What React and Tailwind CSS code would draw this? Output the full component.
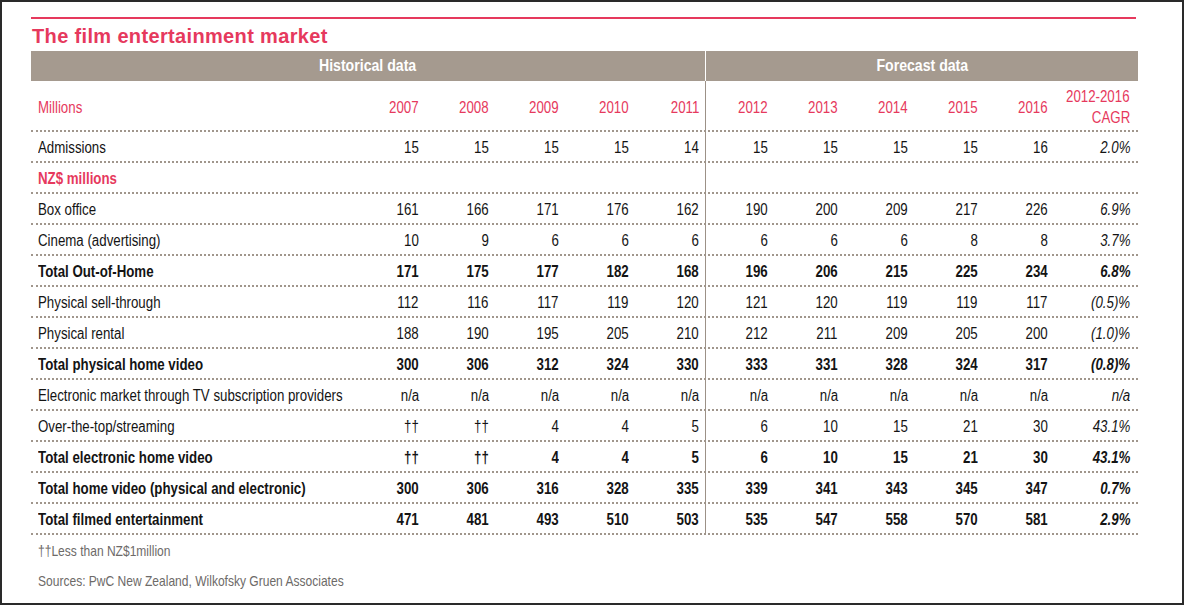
const rows = [
  { label: 'Admissions', vals: ['15', '15', '15', '15', '14', '15', '15', '15', '15', '16'], cagr: '2.0%' },
  { label: 'NZ$ millions', section: true },
  { label: 'Box office', vals: ['161', '166', '171', '176', '162', '190', '200', '209', '217', '226'], cagr: '6.9%' },
  { label: 'Cinema (advertising)', vals: ['10', '9', '6', '6', '6', '6', '6', '6', '8', '8'], cagr: '3.7%' },
  { label: 'Total Out-of-Home', bold: true, vals: ['171', '175', '177', '182', '168', '196', '206', '215', '225', '234'], cagr: '6.8%' },
  { label: 'Physical sell-through', vals: ['112', '116', '117', '119', '120', '121', '120', '119', '119', '117'], cagr: '(0.5)%' },
  { label: 'Physical rental', vals: ['188', '190', '195', '205', '210', '212', '211', '209', '205', '200'], cagr: '(1.0)%' },
  { label: 'Total physical home video', bold: true, vals: ['300', '306', '312', '324', '330', '333', '331', '328', '324', '317'], cagr: '(0.8)%' },
  { label: 'Electronic market through TV subscription providers', vals: ['n/a', 'n/a', 'n/a', 'n/a', 'n/a', 'n/a', 'n/a', 'n/a', 'n/a', 'n/a'], cagr: 'n/a' },
  { label: 'Over-the-top/streaming', vals: ['††', '††', '4', '4', '5', '6', '10', '15', '21', '30'], cagr: '43.1%' },
  { label: 'Total electronic home video', bold: true, vals: ['††', '††', '4', '4', '5', '6', '10', '15', '21', '30'], cagr: '43.1%' },
  { label: 'Total home video (physical and electronic)', bold: true, vals: ['300', '306', '316', '328', '335', '339', '341', '343', '345', '347'], cagr: '0.7%' },
  { label: 'Total filmed entertainment', bold: true, vals: ['471', '481', '493', '510', '503', '535', '547', '558', '570', '581'], cagr: '2.9%' },
];

const years = ['2007', '2008', '2009', '2010', '2011', '2012', '2013', '2014', '2015', '2016'];

// label | 5 historical | 5 forecast | CAGR
const cols = 'grid grid-cols-[318px_70px_70px_70px_70px_70px_69px_70px_70px_70px_70px_90px]';

// no condensed face installed, so squeeze Liberation Sans to narrow width
const L = ({ children }) => <span className="inline-block whitespace-nowrap scale-x-[0.83] origin-left">{children}</span>;
const R = ({ children }) => <span className="inline-block whitespace-nowrap scale-x-[0.83] origin-right">{children}</span>;
const C = ({ children }) => <span className="inline-block whitespace-nowrap scale-x-[0.83] origin-center">{children}</span>;

function Row({ row }) {
  if (row.section) {
    return (
      <div className={`${cols} h-[31px] pt-[2px] items-center border-b-2 border-dotted border-[#a0968c]`}>
        <div className="pl-[7px] font-bold text-[#e6395d]"><L>{row.label}</L></div>
      </div>
    );
  }
  return (
    <div className={`${cols} h-[31px] pt-[2px] items-center border-b-2 border-dotted border-[#a0968c] ${row.bold ? 'font-bold' : ''}`}>
      <div className="pl-[7px]"><L>{row.label}</L></div>
      {row.vals.map((v, i) => (
        <div key={i} className="text-right"><R>{v}</R></div>
      ))}
      <div className="text-right pr-2 italic"><R>{row.cagr}</R></div>
    </div>
  );
}

export default function App() {
  return (
    <div className="w-[1184px] h-[605px] border-2 border-[#2a2a2a] bg-white font-['Liberation_Sans',Arial,sans-serif] text-[16px] text-[#141414] overflow-hidden">
      <div className="ml-[29px] w-[1107px]">
        <div className="mt-[15px] h-[2px] w-[1105px] bg-[#e6395d]" />
        <h1 className="h-[32px] pt-[3px] pl-px text-[20px] leading-[28px] font-bold tracking-[0.35px] text-[#e6395d]">
          The film entertainment market
        </h1>

        {/* header bar */}
        <div className="flex h-[30px] bg-[#a59a8f] text-white font-bold leading-[30px] text-[17px]">
          <div className="w-[674px] text-center"><C>Historical data</C></div>
          <div className="w-px bg-white" />
          <div className="flex-1 text-center"><C>Forecast data</C></div>
        </div>

        <div className="relative">
          <div className={`${cols} h-[51px] items-center border-b-2 border-dotted border-[#a0968c] text-[#e6395d] pt-[4px]`}>
            <div className="pl-[7px]"><L>Millions</L></div>
            {years.map((y) => (
              <div key={y} className="text-right"><R>{y}</R></div>
            ))}
            <div className="text-right pr-2 leading-[21px] -mt-[2px]">
              <R>2012-2016</R>
              <br />
              <R>CAGR</R>
            </div>
          </div>
          {rows.map((r) => (
            <Row key={r.label} row={r} />
          ))}
          <div className="absolute left-[674px] top-0 bottom-0 w-px bg-[#9c9187]" />
        </div>

        <div className="pl-[7px] text-[14.5px] text-[#6d6a68]">
          <div className="mt-[6px] leading-[20px]"><L>††Less than NZ$1million</L></div>
          <div className="mt-[10px] leading-[20px]"><L>Sources: PwC New Zealand, Wilkofsky Gruen Associates</L></div>
        </div>
      </div>
    </div>
  );
}
